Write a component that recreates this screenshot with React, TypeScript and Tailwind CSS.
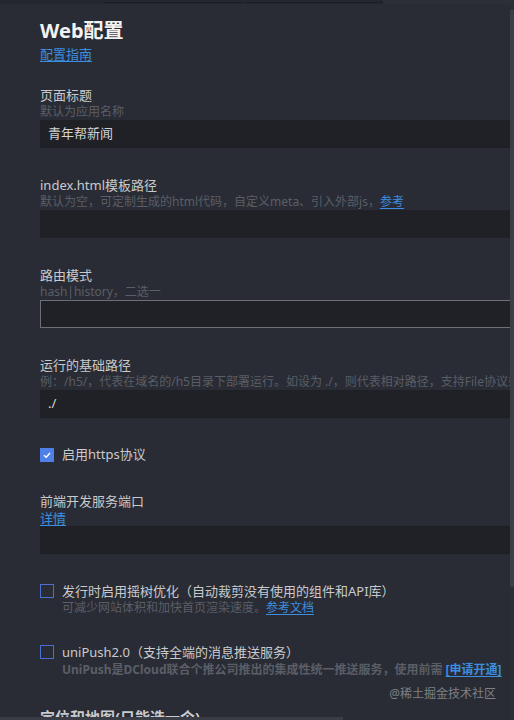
import React from "react";

const font = { fontFamily: '"Noto Sans", "Noto Sans CJK SC", sans-serif' };

function Label({ children }: { children: React.ReactNode }) {
  return <div className="text-[13px] leading-[18px] text-[#c9cacd] whitespace-nowrap">{children}</div>;
}
function Hint({ children }: { children: React.ReactNode }) {
  return <div className="text-[12px] leading-[16px] text-[#5b5e66] whitespace-nowrap overflow-hidden">{children}</div>;
}
function Link({ children }: { children: React.ReactNode }) {
  return <span className="text-[#3b8ee0] underline underline-offset-2">{children}</span>;
}
function Input({ value, bordered }: { value?: string; bordered?: boolean }) {
  return (
    <div
      className={
        "h-[28px] bg-[#1f2126] flex items-center pl-[8px] text-[13px] text-[#d2d3d5] " +
        (bordered ? "border border-[#6c6f76] border-r-0" : "")
      }
    >
      {value}
    </div>
  );
}
function Check({ checked }: { checked?: boolean }) {
  return checked ? (
    <div className="w-[14px] h-[14px] bg-[#4f80e8] flex items-center justify-center shrink-0">
      <svg width="10" height="10" viewBox="0 0 10 10">
        <path d="M2 5.2 L4.2 7.2 L8 3" fill="none" stroke="#fff" strokeWidth="1.4" />
      </svg>
    </div>
  ) : (
    <div className="w-[14px] h-[14px] border border-[#4a6fd0] shrink-0" />
  );
}

export default function App() {
  return (
    <div className="w-[514px] h-[720px] bg-[#292c34] overflow-hidden relative flex flex-col" style={font}>
      {/* top strip */}
      <div className="h-[4px] flex shrink-0 bg-[#25272e]">
        <div className="w-[104px]" />
        <div className="w-[139px] h-[3px] border-b border-[#1b1d22]" />
        <div className="w-[2px]" />
        <div className="w-[138px] h-[3px] border-b border-[#1b1d22]" />
        <div className="flex-1 bg-[#2c2f37]" />
      </div>
      <div className="flex flex-1 min-h-0">
        <div className="flex-1 min-w-0 pl-[40px] pt-[14px] flex flex-col">
          <div className="text-[20px] leading-[26px] font-bold text-[#f2f2f2]">Web配置</div>
          <div className="text-[13px] leading-[18px] mt-[1px]"><Link>配置指南</Link></div>

          <div className="mt-[23px]">
            <Label>页面标题</Label>
            <Hint>默认为应用名称</Hint>
            <Input value="青年帮新闻" />
          </div>

          <div className="mt-[28px]">
            <Label>index.html模板路径</Label>
            <Hint>默认为空，可定制生成的html代码，自定义meta、引入外部js，<Link>参考</Link></Hint>
            <Input />
          </div>

          <div className="mt-[28px]">
            <Label>路由模式</Label>
            <Hint>hash|history，二选一</Hint>
            <Input bordered />
          </div>

          <div className="mt-[28px]">
            <Label>运行的基础路径</Label>
            <Hint>例：/h5/，代表在域名的/h5目录下部署运行。如设为 ./，则代表相对路径，支持File协议或</Hint>
            <Input value="./" />
          </div>

          <div className="mt-[28px] flex items-center gap-[8px] h-[18px]">
            <Check checked />
            <span className="text-[13px] text-[#c9cacd]">启用https协议</span>
          </div>

          <div className="mt-[28px]">
            <Label>前端开发服务端口</Label>
            <div className="text-[13px] leading-[16px]"><Link>详情</Link></div>
            <Input />
          </div>

          <div className="mt-[28px] flex gap-[8px]">
            <div className="pt-[2px]"><Check /></div>
            <div>
              <Label>发行时启用摇树优化（自动裁剪没有使用的组件和API库）</Label>
              <Hint>可减少网站体积和加快首页渲染速度。<Link>参考文档</Link></Hint>
            </div>
          </div>

          <div className="mt-[27px] flex gap-[8px]">
            <div className="pt-[2px]"><Check /></div>
            <div className="min-w-0">
              <Label>uniPush2.0（支持全端的消息推送服务）</Label>
              <div className="text-[12px] leading-[18px] font-bold text-[#5b5e66] whitespace-nowrap">
                UniPush是DCloud联合个推公司推出的集成性统一推送服务，使用前需 <Link>[申请开通]</Link>
              </div>
            </div>
          </div>

          <div className="flex justify-end pr-[14px] mt-[7px]">
            <span className="text-[12px] leading-[16px] text-[#7e8087]">@稀土掘金技术社区</span>
          </div>

          <div className="text-[15px] leading-[20px] font-bold text-[#c9cacd] mt-[5px]">定位和地图(只能选一个)</div>
        </div>
        {/* vertical scrollbar */}
        <div className="w-[4px] flex flex-col pt-[6px] bg-[#2b2e36]">
          <div className="h-[577px] bg-[#3b3e47]" />
        </div>
      </div>
      <div className="absolute left-0 bottom-0 w-[343px] h-[3px] bg-[#3a3d45]" />
    </div>
  );
}
